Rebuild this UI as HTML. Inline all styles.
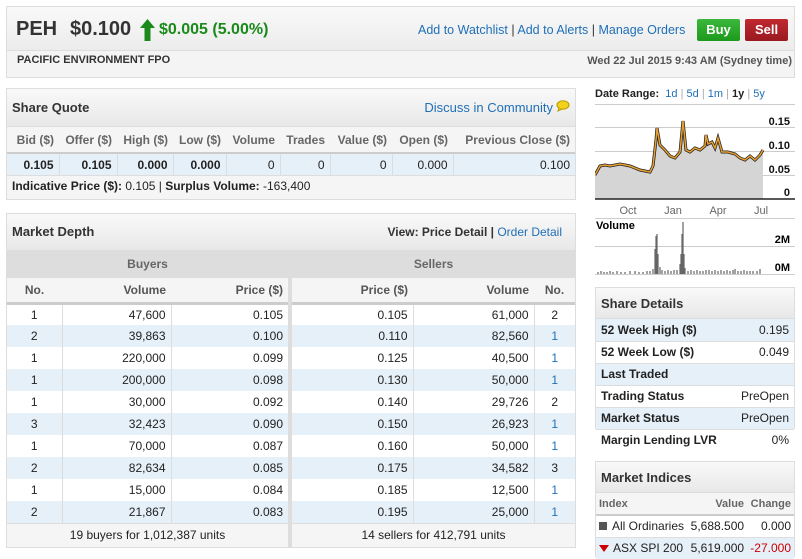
<!DOCTYPE html>
<html><head><meta charset="utf-8"><style>
*{box-sizing:border-box;margin:0;padding:0}
body{width:802px;height:559px;background:#fff;font-family:"Liberation Sans",Arial,sans-serif;font-size:12px;color:#222;position:relative;overflow:hidden}
.abs{position:absolute}
.box{position:absolute;border:1px solid #ddd;background:#f5f5f5}
.title{background:linear-gradient(#f9f9f9,#e8e8e8);font-weight:bold;font-size:13px;color:#333;padding-left:5px;border-bottom:1px solid #ddd}
a,.lnk{color:#1f6fb8;text-decoration:none}
table{border-collapse:collapse;width:100%}
td,th{font-size:12px;height:22px;padding:0 5px;white-space:nowrap}
.blue{background:#e6f0f8}
#mi td,#mi th{padding:0 3px}
</style></head><body>

<!-- header -->
<div class="box" style="left:6px;top:6px;width:789px;height:72px;background:#f4f4f4">
  <div style="height:44px;background:linear-gradient(#f9f9f9,#ececec);border-bottom:1px solid #ddd;position:relative">
    <div class="abs" style="left:9px;top:11px;font-size:20px;font-weight:bold;color:#333">PEH</div>
    <div class="abs" style="left:63px;top:11px;font-size:20px;font-weight:bold;color:#333">$0.100</div>
    <svg class="abs" style="left:133px;top:12px" width="15" height="22"><path d="M7.5 0 L15 9 L10.5 9 L10.5 22 L4.5 22 L4.5 9 L0 9Z" fill="#1a8a1a"/></svg>
    <div class="abs" style="left:152px;top:14px;font-size:16px;font-weight:bold;color:#1a8a1a">$0.005 (5.00%)</div>
    <div class="abs" style="left:411px;top:16px;font-size:12.5px;color:#ccc"><a>Add to Watchlist</a> <span style="color:#333">|</span> <a>Add to Alerts</a> <span style="color:#333">|</span> <a>Manage Orders</a></div>
    <div class="abs" style="left:690px;top:12px;width:43px;height:22px;background:linear-gradient(#3cb83c,#1c9a1c);border-radius:2px;color:#fff;font-weight:bold;font-size:13px;text-align:center;line-height:22px">Buy</div>
    <div class="abs" style="left:738px;top:12px;width:43px;height:22px;background:linear-gradient(#c0282f,#9a1a20);border-radius:2px;color:#fff;font-weight:bold;font-size:13px;text-align:center;line-height:22px">Sell</div>
  </div>
  <div class="abs" style="left:10px;top:47px;font-size:11px;font-weight:bold;color:#333">PACIFIC ENVIRONMENT FPO</div>
  <div class="abs" style="right:2px;top:48px;font-size:11px;font-weight:bold;color:#555">Wed 22 Jul 2015 9:43 AM (Sydney time)</div>
</div>

<!-- share quote -->
<div class="box" style="left:6px;top:88px;width:570px;height:112px">
  <div class="title" style="height:38px;line-height:38px;position:relative">Share Quote
    <span class="abs" style="right:22px;top:0;font-weight:normal;font-size:13px;color:#1f6fb8">Discuss in Community</span>
    <svg class="abs" style="right:5px;top:11px" width="14" height="12"><ellipse cx="7" cy="5" rx="6" ry="4.2" fill="#f2d21a" stroke="#b89a00"/><path d="M3 8 L2 11 L6 9" fill="#f2d21a" stroke="#b89a00"/></svg>
  </div>
  <table style="margin-top:0">
    <tr style="color:#666;font-weight:bold;height:26px"><td style="height:26px;text-align:right;font-weight:bold;width:52px">Bid ($)</td><td style="text-align:right;font-weight:bold;width:58px">Offer ($)</td><td style="text-align:right;font-weight:bold;width:56px">High ($)</td><td style="text-align:right;font-weight:bold;width:53px">Low ($)</td><td style="text-align:right;font-weight:bold;width:54px">Volume</td><td style="text-align:right;font-weight:bold;width:50px">Trades</td><td style="text-align:right;font-weight:bold;width:62px">Value ($)</td><td style="text-align:right;font-weight:bold;width:61px">Open ($)</td><td style="text-align:right;font-weight:bold">Previous Close ($)</td></tr>
    <tr class="blue" style="border-top:2px solid #ccc"><td style="text-align:right;font-weight:bold;border-right:1px solid #ddd">0.105</td><td style="text-align:right;font-weight:bold;border-right:1px solid #ddd">0.105</td><td style="text-align:right;font-weight:bold;border-right:1px solid #ddd">0.000</td><td style="text-align:right;font-weight:bold;border-right:1px solid #ddd">0.000</td><td style="text-align:right;border-right:1px solid #ddd">0</td><td style="text-align:right;border-right:1px solid #ddd">0</td><td style="text-align:right;border-right:1px solid #ddd">0</td><td style="text-align:right;border-right:1px solid #ddd">0.000</td><td style="text-align:right">0.100</td></tr>
  </table>
  <div style="border-top:1px solid #ddd;padding-left:5px;height:22px;line-height:21px"><b>Indicative Price ($):</b> 0.105 | <b>Surplus Volume:</b> -163,400</div>
</div>

<!-- market depth -->
<div class="box" style="left:6px;top:213px;width:570px;height:335px;background:#fff">
  <div class="title" style="height:36px;line-height:36px;position:relative;border-bottom:none">Market Depth
    <span class="abs" style="right:13px;top:0;font-size:12px">View: Price Detail | <span style="font-weight:normal;color:#1f6fb8">Order Detail</span></span></div>
  <div style="display:flex;background:#ddd;height:28px;line-height:28px;font-weight:bold;color:#666;text-align:center"><div style="width:281px">Buyers</div><div style="width:4px"></div><div style="flex:1">Sellers</div></div>
  <div style="display:flex">
  <div style="width:281px">
  <table id="b"><tr style="background:#f5f5f5;border-bottom:3px solid #ccc;color:#555"><th style="height:25px;width:55px">No.</th><th style="text-align:right;width:109px">Volume</th><th style="text-align:right">Price ($)</th></tr>
  </table></div>
  <div style="width:4px;background:#ddd"></div>
  <div style="flex:1">
  <table id="s"><tr style="background:#f5f5f5;border-bottom:3px solid #ccc;color:#555"><th style="height:25px;text-align:right;width:121px">Price ($)</th><th style="text-align:right;width:121px">Volume</th><th>No.</th></tr>
  </table></div></div>
  <div style="display:flex;background:#f5f5f5;height:24px;line-height:23px;text-align:center;border-top:1px solid #ddd"><div style="width:281px">19 buyers for 1,012,387 units</div><div style="width:4px;background:#ddd"></div><div style="flex:1">14 sellers for 412,791 units</div></div>
</div>

<!-- right column -->
<div class="abs" style="left:595px;top:88px;font-size:11px"><b style="color:#222">Date Range:</b> <span class="lnk">&nbsp;1d</span> <span style="color:#aaa">|</span> <span class="lnk">5d</span> <span style="color:#aaa">|</span> <span class="lnk">1m</span> <span style="color:#aaa">|</span> <b>1y</b> <span style="color:#aaa">|</span> <span class="lnk">5y</span></div>
<svg class="abs" style="left:595px;top:104px" width="200" height="172">
  <line x1="0" y1="0.5" x2="200" y2="0.5" stroke="#ccc"/>
  <line x1="0" y1="23.5" x2="200" y2="23.5" stroke="#ccc"/>
  <line x1="0" y1="47.5" x2="200" y2="47.5" stroke="#ccc"/>
  <line x1="0" y1="71.5" x2="200" y2="71.5" stroke="#ccc"/>
  <path d="M0 72 L0 71 L5 62 L10 61 L15 62 L25 60 L35 62 L45 66 L55 68 L58 62 L61 36 L62 24 L65 41 L70 46 L75 52 L80 54 L85 48 L88 17 L91 46 L95 48 L100 44 L105 46 L110 42 L111 31 L113 40 L117 38 L120 44 L123 34 L127 48 L133 48 L140 50 L145 54 L150 56 L155 52 L160 56 L165 51 L168 46 L168 95 L0 95Z" fill="#d5d5d5"/>
  <path d="M0 71 L5 62 L10 61 L15 62 L25 60 L35 62 L45 66 L55 68 L58 62 L61 36 L62 24 L65 41 L70 46 L75 52 L80 54 L85 48 L88 17 L91 46 L95 48 L100 44 L105 46 L110 42 L111 31 L113 40 L117 38 L120 44 L123 34 L127 48 L133 48 L140 50 L145 54 L150 56 L155 52 L160 56 L165 51 L168 46" fill="none" stroke="#222" stroke-width="3"/>
  <path d="M0 71 L5 62 L10 61 L15 62 L25 60 L35 62 L45 66 L55 68 L58 62 L61 36 L62 24 L65 41 L70 46 L75 52 L80 54 L85 48 L88 17 L91 46 L95 48 L100 44 L105 46 L110 42 L111 31 L113 40 L117 38 L120 44 L123 34 L127 48 L133 48 L140 50 L145 54 L150 56 L155 52 L160 56 L165 51 L168 46" fill="none" stroke="#e8a030" stroke-width="1.5"/>
  <line x1="0" y1="95" x2="200" y2="95" stroke="#222" stroke-width="1.5"/>
  <g font-family="Liberation Sans" font-size="11" font-weight="bold" text-anchor="end" fill="#111">
  <text x="195" y="21">0.15</text><text x="195" y="45">0.10</text><text x="195" y="69">0.05</text><text x="195" y="92">0</text></g>
  <g font-family="Liberation Sans" font-size="11" fill="#666" text-anchor="middle"><text x="33" y="110">Oct</text><text x="78" y="110">Jan</text><text x="123" y="110">Apr</text><text x="166" y="110">Jul</text></g>
  <line x1="0" y1="114.5" x2="200" y2="114.5" stroke="#ccc"/>
  <line x1="0" y1="142.5" x2="200" y2="142.5" stroke="#ccc"/>
  <line x1="0" y1="170.5" x2="200" y2="170.5" stroke="#ccc"/>
  <text x="1" y="125" font-family="Liberation Sans" font-size="11" font-weight="bold">Volume</text>
  <g font-family="Liberation Sans" font-size="11" font-weight="bold" text-anchor="end"><text x="195" y="139">2M</text><text x="195" y="167">0M</text></g>
  <path d="M3 170V168M6 170V167M9 170V168M12 170V168M15 170V167M18 170V168M22 170V167M26 170V168M30 170V168M35 170V167M40 170V167M44 170V168M48 170V168M52 170V167M55 170V167M58 170V165M60 170V145M61 170V132M62 170V130M63 170V150M65 170V163M67 170V166M70 170V167M73 170V166M76 170V167M79 170V166M82 170V166M85 170V160M86 170V150M87 170V130M88 170V118M89 170V150M90 170V164M93 170V167M96 170V166M99 170V167M102 170V166M105 170V167M108 170V167M111 170V166M114 170V166M117 170V167M120 170V166M123 170V167M126 170V166M129 170V167M132 170V166M135 170V167M138 170V166M140 170V165M143 170V167M146 170V167M149 170V166M152 170V167M155 170V167M158 170V167M162 170V167M165 170V165" stroke="#666" stroke-width="1.2"/>
</svg>

<div class="box" style="left:595px;top:287px;width:200px;height:142px;background:#fff">
  <div class="title" style="height:31px;line-height:31px">Share Details</div>
  <table>
    <tr class="blue"><td style="font-weight:bold;border-bottom:1px solid #ddd">52 Week High ($)</td><td style="text-align:right;border-bottom:1px solid #ddd">0.195</td></tr>
    <tr><td style="font-weight:bold;border-bottom:1px solid #ddd">52 Week Low ($)</td><td style="text-align:right;border-bottom:1px solid #ddd">0.049</td></tr>
    <tr class="blue"><td style="font-weight:bold;border-bottom:1px solid #ddd">Last Traded</td><td style="border-bottom:1px solid #ddd"></td></tr>
    <tr><td style="font-weight:bold;border-bottom:1px solid #ddd">Trading Status</td><td style="text-align:right;border-bottom:1px solid #ddd">PreOpen</td></tr>
    <tr class="blue"><td style="font-weight:bold;border-bottom:1px solid #ddd">Market Status</td><td style="text-align:right;border-bottom:1px solid #ddd">PreOpen</td></tr>
    <tr><td style="font-weight:bold">Margin Lending LVR</td><td style="text-align:right">0%</td></tr>
  </table>
</div>

<div class="box" style="left:595px;top:461px;width:200px;height:96px;background:#fff">
  <div class="title" style="height:31px;line-height:31px">Market Indices</div>
  <table id="mi">
    <tr style="background:#f5f5f5;color:#666;border-bottom:2px solid #ccc"><th style="text-align:left;height:20px;font-size:11px">Index</th><th style="text-align:right;font-size:11px">Value</th><th style="text-align:right;font-size:11px">Change</th></tr>
    <tr style="border-bottom:1px solid #ddd"><td><span style="display:inline-block;width:8px;height:8px;background:#555;margin-right:5px"></span>All Ordinaries</td><td style="text-align:right">5,688.500</td><td style="text-align:right">0.000</td></tr>
    <tr class="blue"><td><span style="display:inline-block;width:0;height:0;border-left:5px solid transparent;border-right:5px solid transparent;border-top:7px solid #c00;margin-right:4px"></span>ASX SPI 200</td><td style="text-align:right">5,619.000</td><td style="text-align:right;color:#c00">-27.000</td></tr>
  </table>
</div>

<script>
var b=[[1,"47,600","0.105"],[2,"39,863","0.100"],[1,"220,000","0.099"],[1,"200,000","0.098"],[1,"30,000","0.092"],[3,"32,423","0.090"],[1,"70,000","0.087"],[2,"82,634","0.085"],[1,"15,000","0.084"],[2,"21,867","0.083"]];
var s=[["0.105","61,000",2],["0.110","82,560",1],["0.125","40,500",1],["0.130","50,000",1],["0.140","29,726",2],["0.150","26,923",1],["0.160","50,000",1],["0.175","34,582",3],["0.185","12,500",1],["0.195","25,000",1]];
var bt=document.getElementById('b'),st=document.getElementById('s'),h1='',h2='';
for(var i=0;i<10;i++){var c=i%2?' class="blue"':'';
h1+='<tr'+c+'><td style="text-align:center;border-right:1px solid #ddd">'+b[i][0]+'</td><td style="text-align:right;border-right:1px solid #ddd">'+b[i][1]+'</td><td style="text-align:right">'+b[i][2]+'</td></tr>';
h2+='<tr'+c+'><td style="text-align:right;border-right:1px solid #ddd">'+s[i][0]+'</td><td style="text-align:right;border-right:1px solid #ddd">'+s[i][1]+'</td><td style="text-align:center;'+(s[i][2]==1?'color:#1f6fb8':'')+'">'+s[i][2]+'</td></tr>';}
bt.insertAdjacentHTML('beforeend',h1);st.insertAdjacentHTML('beforeend',h2);
</script>
</body></html>
